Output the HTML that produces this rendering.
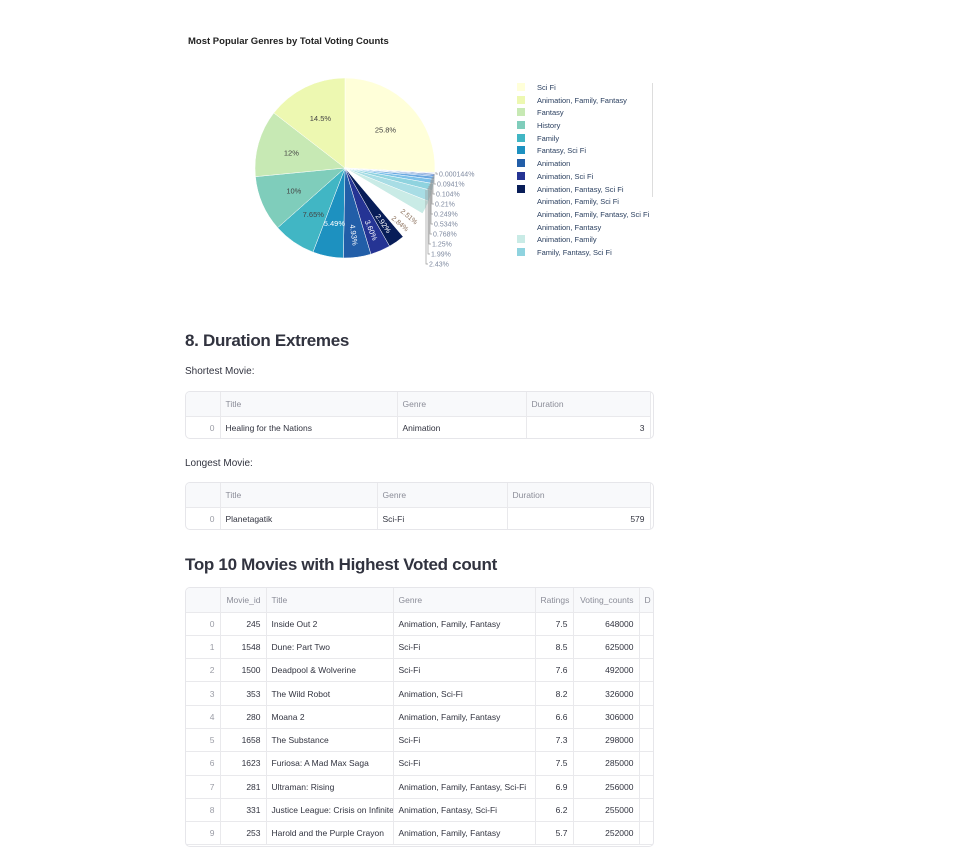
<!DOCTYPE html>
<html><head><meta charset="utf-8"><style>
body{margin:0;background:#fff;font-family:"Liberation Sans",sans-serif;color:#31333f;}
.abs{position:absolute}
.t{position:absolute;border:1px solid #e6e6ea;border-radius:5px;overflow:hidden;background:#fff}
.t table{border-collapse:collapse;font-size:8.5px;table-layout:fixed}
.t td{border-right:1px solid #e9e9ec;border-bottom:1px solid #e9e9ec;padding:0 5px;white-space:nowrap;overflow:hidden;color:#31333f}
.t tr.h td{background:#f8f9fb;color:#8b8d98}
.t td.i{color:#9a9ca5;text-align:right}
.t td.r{text-align:right}
.leg{position:absolute;left:517px;font-size:7.5px;color:#2a3f5f}
.leg div{height:12.7px;line-height:12.7px;white-space:nowrap}
.leg span{display:inline-block;width:8px;height:8px;margin-right:12px;vertical-align:-1px}
h2{position:absolute;margin:0;font-size:17px;font-weight:bold;letter-spacing:-0.3px;color:#31333f}
</style></head><body>
<div class="abs" style="left:188px;top:36px;font-size:9.5px;font-weight:bold;color:#222">Most Popular Genres by Total Voting Counts</div>
<svg class="abs" style="left:0;top:0" width="967" height="300" id="pie"></svg>
<div class="leg" style="top:82px">
<div><span style="background:#ffffd9"></span>Sci Fi</div>
<div><span style="background:#edf8b1"></span>Animation, Family, Fantasy</div>
<div><span style="background:#c7e9b4"></span>Fantasy</div>
<div><span style="background:#7fcdbb"></span>History</div>
<div><span style="background:#41b6c4"></span>Family</div>
<div><span style="background:#1d91c0"></span>Fantasy, Sci Fi</div>
<div><span style="background:#225ea8"></span>Animation</div>
<div><span style="background:#253494"></span>Animation, Sci Fi</div>
<div><span style="background:#081d58"></span>Animation, Fantasy, Sci Fi</div>
<div><span style="background:#fff"></span>Animation, Family, Sci Fi</div>
<div><span style="background:#fff"></span>Animation, Family, Fantasy, Sci Fi</div>
<div><span style="background:#fff"></span>Animation, Fantasy</div>
<div><span style="background:#c9ebe6"></span>Animation, Family</div>
<div><span style="background:#8fd3df"></span>Family, Fantasy, Sci Fi</div>
</div>
<div class="abs" style="left:652px;top:83px;width:1px;height:114px;background:#ddd"></div>

<h2 style="left:185px;top:331px">8. Duration Extremes</h2>
<div class="abs" style="left:185px;top:366px;font-size:10px">Shortest Movie:</div>
<div class="t" style="left:185px;top:391px;width:467px;height:46px"><table style="width:464px">
<colgroup><col style="width:34px"><col style="width:177px"><col style="width:129px"><col style="width:124px"></colgroup>
<tr class="h" style="height:24px"><td></td><td>Title</td><td>Genre</td><td>Duration</td></tr>
<tr style="height:23px"><td class="i">0</td><td>Healing for the Nations</td><td>Animation</td><td class="r">3</td></tr></table></div>
<div class="abs" style="left:185px;top:458px;font-size:10px">Longest Movie:</div>
<div class="t" style="left:185px;top:482px;width:467px;height:46px"><table style="width:464px">
<colgroup><col style="width:34px"><col style="width:157px"><col style="width:130px"><col style="width:143px"></colgroup>
<tr class="h" style="height:24px"><td></td><td>Title</td><td>Genre</td><td>Duration</td></tr>
<tr style="height:23px"><td class="i">0</td><td>Planetagatik</td><td>Sci-Fi</td><td class="r">579</td></tr></table></div>

<h2 style="left:185px;top:555px">Top 10 Movies with Highest Voted count</h2>
<div class="t" style="left:185px;top:587px;width:467px;height:258px"><table style="width:482px">
<colgroup><col style="width:34px"><col style="width:46px"><col style="width:127px"><col style="width:142px"><col style="width:38px"><col style="width:66px"><col style="width:29px"></colgroup>
<tr class="h" style="height:24px"><td></td><td class="r" style="color:#8b8d98">Movie_id</td><td>Title</td><td>Genre</td><td class="r" style="color:#8b8d98">Ratings</td><td class="r" style="color:#8b8d98">Voting_counts</td><td>D</td></tr>
<tr style="height:23.3px"><td class="i">0</td><td class="r">245</td><td>Inside Out 2</td><td>Animation, Family, Fantasy</td><td class="r">7.5</td><td class="r">648000</td><td></td></tr>
<tr style="height:23.3px"><td class="i">1</td><td class="r">1548</td><td>Dune: Part Two</td><td>Sci-Fi</td><td class="r">8.5</td><td class="r">625000</td><td></td></tr>
<tr style="height:23.3px"><td class="i">2</td><td class="r">1500</td><td>Deadpool &amp; Wolverine</td><td>Sci-Fi</td><td class="r">7.6</td><td class="r">492000</td><td></td></tr>
<tr style="height:23.3px"><td class="i">3</td><td class="r">353</td><td>The Wild Robot</td><td>Animation, Sci-Fi</td><td class="r">8.2</td><td class="r">326000</td><td></td></tr>
<tr style="height:23.3px"><td class="i">4</td><td class="r">280</td><td>Moana 2</td><td>Animation, Family, Fantasy</td><td class="r">6.6</td><td class="r">306000</td><td></td></tr>
<tr style="height:23.3px"><td class="i">5</td><td class="r">1658</td><td>The Substance</td><td>Sci-Fi</td><td class="r">7.3</td><td class="r">298000</td><td></td></tr>
<tr style="height:23.3px"><td class="i">6</td><td class="r">1623</td><td>Furiosa: A Mad Max Saga</td><td>Sci-Fi</td><td class="r">7.5</td><td class="r">285000</td><td></td></tr>
<tr style="height:23.3px"><td class="i">7</td><td class="r">281</td><td>Ultraman: Rising</td><td>Animation, Family, Fantasy, Sci-Fi</td><td class="r">6.9</td><td class="r">256000</td><td></td></tr>
<tr style="height:23.3px"><td class="i">8</td><td class="r">331</td><td>Justice League: Crisis on Infinite</td><td>Animation, Fantasy, Sci-Fi</td><td class="r">6.2</td><td class="r">255000</td><td></td></tr>
<tr style="height:23.3px"><td class="i">9</td><td class="r">253</td><td>Harold and the Purple Crayon</td><td>Animation, Family, Fantasy</td><td class="r">5.7</td><td class="r">252000</td><td></td></tr>
</table></div>
<script>
var s=document.getElementById('pie'),cx=345,cy=168,R=90;
var d=[[25.8,'#ffffd9','25.8%'],[0.000144,'#ddd'],[0.0941,'#3a5fb0'],[0.104,'#4a72c8'],[0.21,'#3d6fc0'],[0.249,'#5a90d8'],[0.534,'#6aa8e0'],[0.768,'#7cc0e8'],[1.25,'#8fd3df'],[1.99,'#a8dde5'],[2.43,'#c9ebe6'],[2.51,'#fff'],[2.84,'#fff'],[2.92,'#081d58','2.92%'],[3.60,'#253494','3.60%'],[4.93,'#225ea8','4.93%'],[5.49,'#1d91c0','5.49%'],[7.65,'#41b6c4','7.65%'],[10,'#7fcdbb','10%'],[12,'#c7e9b4','12%'],[14.5,'#edf8b1','14.5%']];
var tot=0;d.forEach(function(x){tot+=x[0]});var a=0;
function pt(t,r){return [cx+r*Math.sin(t),cy-r*Math.cos(t)]}
var h='';
d.forEach(function(x){var a2=a+x[0]/tot*2*Math.PI,p1=pt(a,R),p2=pt(a2,R);
h+='<path d="M'+cx+','+cy+'L'+p1+'A'+R+','+R+' 0 '+(a2-a>Math.PI?1:0)+' 1 '+p2+'Z" fill="'+x[1]+'" stroke="#fff" stroke-width="0.5"/>';
if(x[2]){var m=(a+a2)/2,q=pt(m,R*(x[0]<5.2?0.75:0.62)),dark=['#081d58','#253494','#225ea8','#1d91c0'].indexOf(x[1])>=0;
h+='<text x="'+q[0]+'" y="'+(q[1]+3)+'" font-size="7.5" text-anchor="middle" fill="'+(dark?'#fff':'#444')+'"'+(x[0]<5.2?' transform="rotate('+(m*180/Math.PI-90)+' '+q[0]+' '+(q[1])+')"':'')+'>'+x[2]+'</text>';}
a=a2;});
var lb=['0.000144%','0.0941%','0.104%','0.21%','0.249%','0.534%','0.768%','1.25%','1.99%','2.43%'];
var lx=[436,434,433,432,431,431,430,429,428,426];
lb.forEach(function(t,i){var y=174+i*10;h+='<path d="M'+lx[i]+','+(172+i*2)+'V'+(y)+'H'+(lx[i]+2)+'" stroke="#999" fill="none" stroke-width="0.7"/><text x="'+(lx[i]+3)+'" y="'+(y+2.5)+'" font-size="7" fill="#7f8aa0">'+t+'</text>';});
h+='<text x="400" y="212" font-size="7" fill="#8a6f5a" transform="rotate(40 400 212)">2.51%</text>';
h+='<text x="391" y="219" font-size="7" fill="#8a6f5a" transform="rotate(40 391 219)">2.84%</text>';
s.innerHTML=h;
</script>
</body></html>
